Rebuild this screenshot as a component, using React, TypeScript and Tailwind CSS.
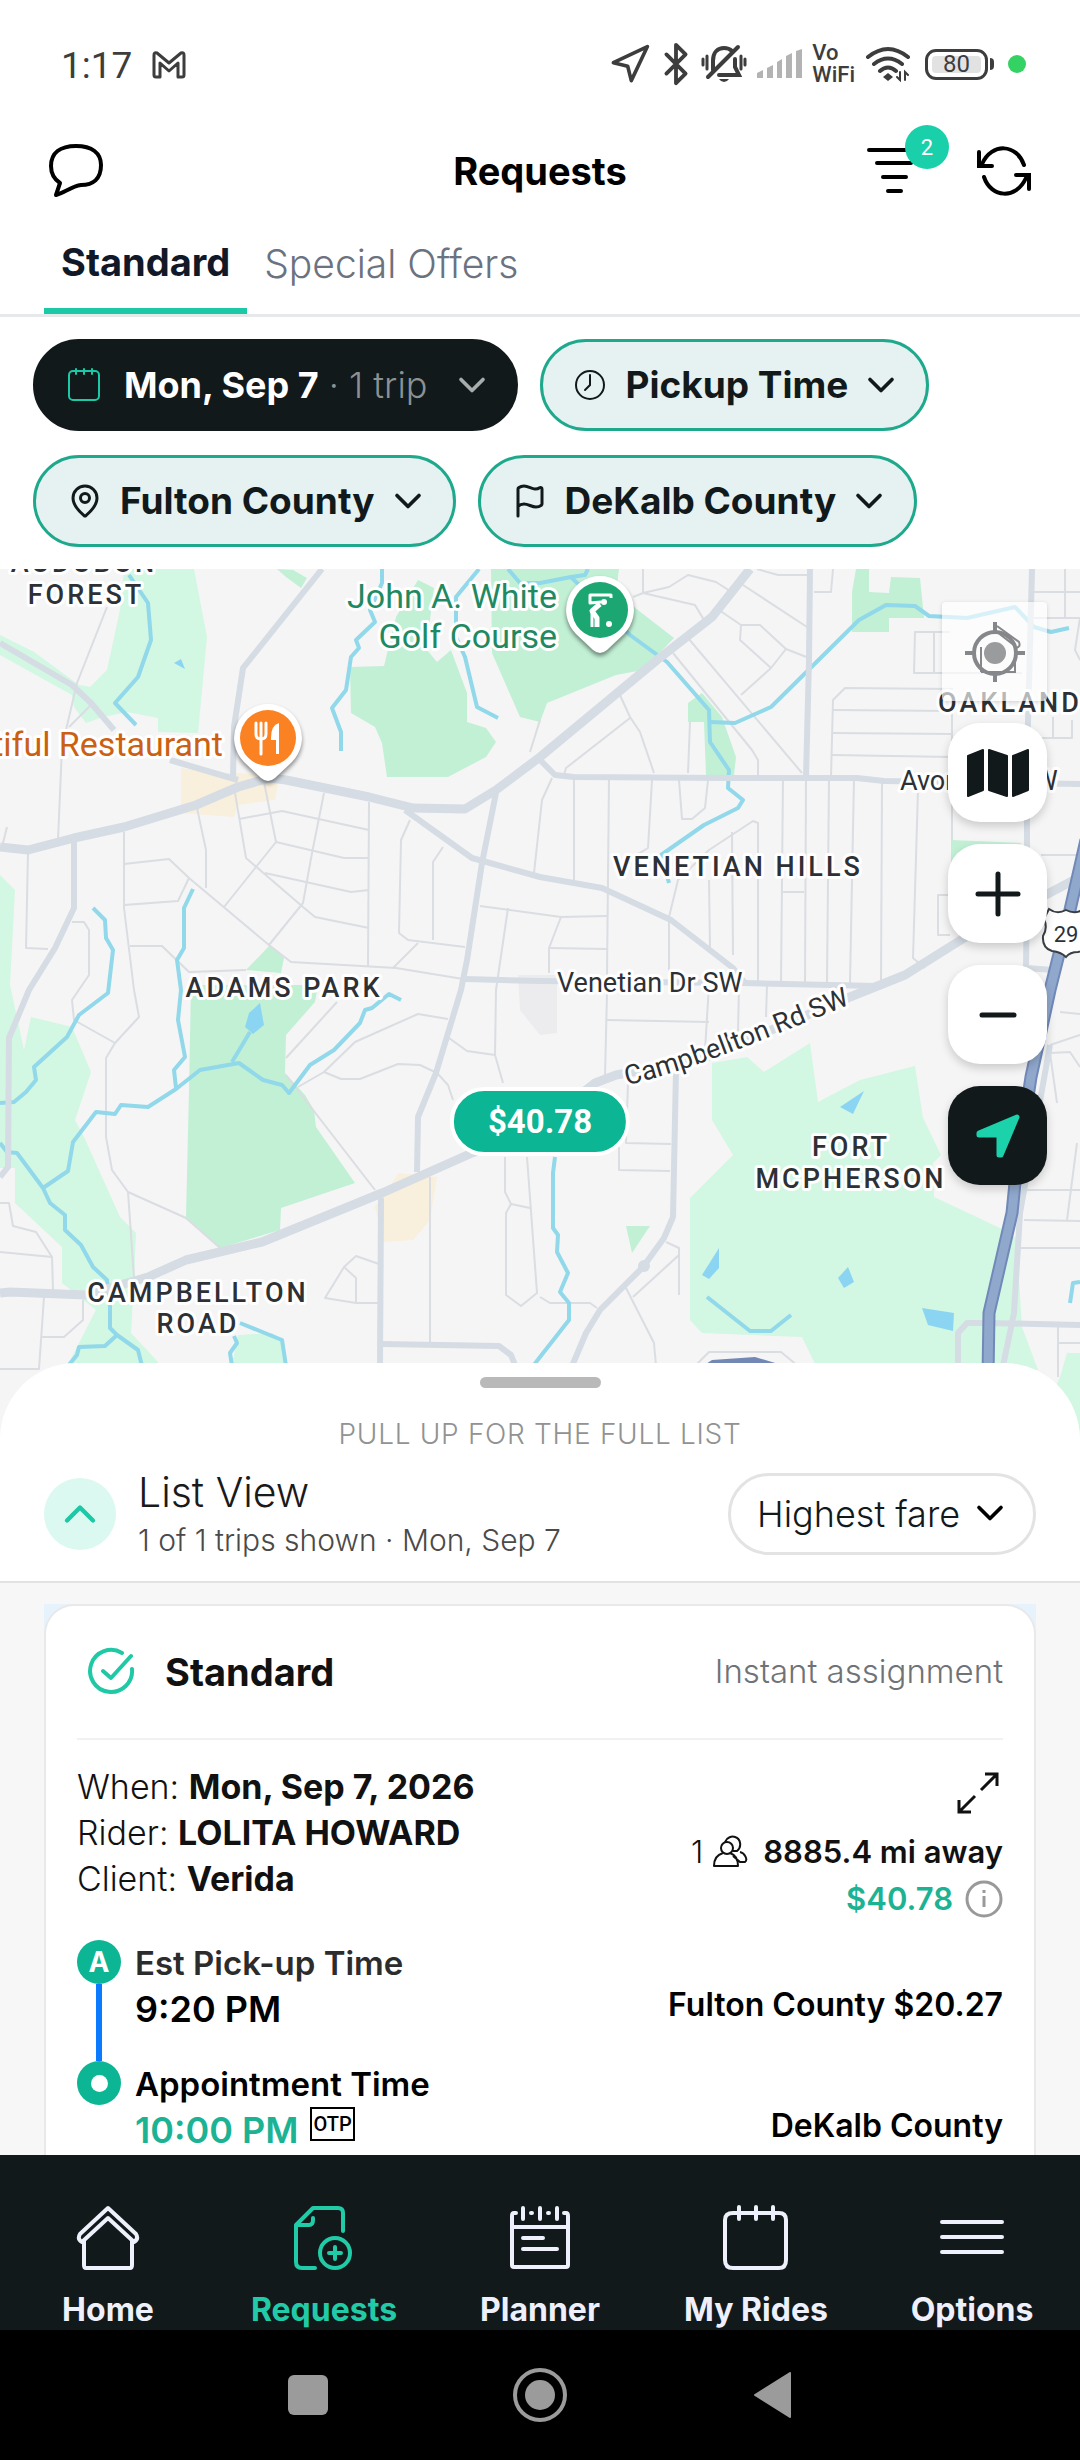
import type { ReactNode } from "react";
import { Bluetooth, ChevronDown, ChevronUp, Flag, MapPin, Navigation } from "lucide-react";

const WATER = "#90d8ea";
const MAJOR = "#d5dce4";

const lightParks = [
  "124,569 194,569 207,637 198,733 158,732 158,718 127,712 103,717 86,723 74,707 72,695 0,655 0,635 34,652 79,685 90,687 107,670 120,610",
  "0,875 15,890 10,985 24,1050 31,1017 72,1027 91,1072 75,1120 84,1137 120,1217 136,1233 134,1280 131,1333 158,1362 158,1380 60,1380 96,1310 62,1283 62,1247 15,1203 15,1168 0,1168",
  "238,1335 272,1333 282,1340 286,1370 231,1370",
  "712,1063 747,1057 764,1072 810,1043 818,1102 860,1080 915,1066 923,1118 941,1155 933,1163 934,1197 1000,1228 1019,1240 1019,1280 1022,1327 1038,1370 818,1370 802,1337 702,1333 690,1320 690,1198 733,1155 712,1120",
  "1067,1353 1080,1353 1080,1439 1050,1400 1060,1377",
];

const darkParks = [
  "277,569 293,570 307,578 301,588 286,577",
  "350,667 384,666 396,617 418,580 434,588 430,620 427,650 437,662 451,650 467,693 467,722 486,728 496,742 486,757 448,777 387,777 382,743 375,727 351,713",
  "491,569 619,569 616,593 674,638 643,670 616,675 547,703 540,722 520,717 492,653",
  "270,945 284,958 281,973 246,970",
  "191,985 318,985 315,1002 286,1035 285,1073 305,1095 314,1110 316,1127 355,1183 281,1208 280,1230 220,1248 186,1217 189,1090",
  "702,693 722,717 736,757 734,775 706,775 704,722 688,722 688,703",
  "856,569 869,569 869,592 889,593 891,577 920,578 924,618 889,618 889,632 852,632 852,592",
  "951,840 1022,843 951,880",
  "626,1226 650,1226 632,1253",
];

const blocks = [
  "181,768 181,813 234,817 238,805 275,800 279,777 238,773 212,773",
  "399,1173 437,1177 430,1220 413,1240 384,1242 375,1207",
];

const ponds = [
  "260,1003 264,1025 253,1034 245,1027 249,1013",
  "174,663 181,659 185,669",
  "702,1275 719,1248 719,1268 709,1279",
  "848,1267 854,1282 844,1288 838,1278",
  "840,1107 864,1091 853,1114",
  "922,1308 954,1313 953,1331 928,1325",
];

const streams = [
  "129,575 148,603 151,640 138,677 115,703 136,725",
  "382,569 382,583 370,610 375,622 356,640 359,648 351,657 346,690 332,708 341,732 341,751",
  "479,569 456,597 456,637 465,657 477,707 498,718",
  "508,569 520,583 540,583 571,577 585,575 588,569",
  "571,577 630,635 667,662 709,710 710,742 729,770 728,788 743,800 738,808 704,825 661,855 669,883",
  "710,722 735,723 771,707 859,620 886,605 915,606 929,616 967,618 1015,607 1034,627 1051,632 1069,628",
  "93,908 105,920 106,938 113,950 108,993 79,1015 67,1037 34,1067 36,1080 26,1092 14,1102 0,1103",
  "193,889 184,908 184,948 177,960 181,990 178,1020 185,1057 174,1070 176,1088",
  "401,1000 389,994 372,1008 365,1010 360,1023 334,1050 310,1065 289,1093 282,1085 263,1080 239,1063 200,1070 176,1089 148,1107 121,1105 115,1114 96,1112 73,1142 68,1171 43,1188",
  "232,1062 250,1032",
  "0,1143 7,1152 17,1153 43,1188 50,1203 65,1215 65,1230 81,1245 93,1267 107,1280 110,1307 110,1328 117,1335 138,1350 142,1366",
  "117,1335 105,1346 79,1347 77,1355 68,1366",
  "234,1336 237,1343 230,1353 232,1366",
  "240,1323 282,1340 286,1366",
  "555,1157 553,1173 553,1228 558,1235 557,1252 568,1273 560,1292 569,1303 569,1320 540,1357 530,1370",
  "707,1297 750,1331 771,1331 791,1315",
  "1070,1303 1073,1283 1080,1282",
];

const highRoads = [
  "0,847 28,850 74,838 124,827 196,805 238,787 269,778 286,780 369,797 413,808 465,809 496,790 540,757 657,660 712,617 750,569",
  "0,1293 10,1292 86,1295 148,1277 186,1260 262,1242 382,1193 472,1153 540,1125 595,1083 616,1075 700,1060 850,997 905,975 964,938 1074,880",
];

const midRoads = [
  "322,569 243,668 234,727 233,777",
  "170,760 238,780",
  "0,643 72,685 91,703 114,730",
  "74,840 74,908 55,948 29,990 9,1038 8,1167 0,1177",
  "405,810 472,858 540,877 602,888 671,920 733,968 745,983",
  "496,793 482,863 467,960 461,990 436,1073 418,1117 417,1172",
  "465,979 540,981 743,983 877,986 905,975",
  "381,1198 380,1366",
  "382,1344 499,1346 511,1355 517,1370",
  "676,1070 673,1217 664,1238 643,1267 600,1310 586,1333 572,1366",
  "540,760 555,775 574,777 729,778 857,778 884,781 1080,784",
  "810,569 809,660 806,777",
  "1032,569 1027,760 1027,893 1026,968 1053,970",
  "958,1366 958,1333 967,1323 988,1323 1080,1325",
  "1050,1045 1020,1213 1014,1313 1003,1366",
];

const streets = [
  "107,607 77,683 62,747 58,840",
  "69,727 91,705",
  "28,852 26,948 48,949",
  "7,827 3,843",
  "124,832 124,908 134,990 139,1017 115,1043 106,1058 106,1137 112,1170 128,1192 186,1218 220,1248",
  "128,1192 134,1277",
  "72,922 84,922 89,930 89,975 72,1000 74,1020 115,1043",
  "124,864 169,859 189,878 269,945",
  "124,905 178,901 189,878",
  "130,946 162,946 189,972 246,970",
  "197,808 206,850 206,888",
  "234,787 246,858 303,907 315,917 369,928",
  "264,782 276,842 224,907",
  "239,819 282,811 369,830",
  "276,842 344,858 369,858",
  "265,873 351,892 369,890",
  "324,793 312,853 303,903 269,945 291,962 396,968 463,979",
  "369,802 368,967",
  "410,820 401,840 399,933 408,940 465,947",
  "443,847 433,862 433,940",
  "418,943 393,968",
  "480,906 561,917 607,916",
  "508,908 496,990 495,1055 503,1083",
  "540,720 530,752",
  "534,873 542,800 552,778",
  "286,1058 337,1002",
  "286,1075 375,1190",
  "298,1087 324,1072 355,1042 418,1014 448,1019",
  "324,1072 341,1079 360,1079 398,1064 420,1065 437,1073 448,1085 453,1100",
  "449,1038 467,1051 495,1055",
  "505,1157 505,1192 511,1204 506,1213 506,1295 521,1306 537,1293 527,1157",
  "511,1204 530,1208",
  "430,1177 430,1342",
  "379,1264 356,1256 344,1267 325,1298 356,1303 379,1303",
  "344,1267 356,1278 356,1303",
  "0,1203 9,1203 13,1226 36,1232 52,1257 53,1290",
  "0,1252 52,1257",
  "44,1297 39,1369 0,1369",
  "83,1300 83,1320 64,1337 41,1337",
  "643,569 643,593 633,597",
  "643,593 669,587 688,575 716,582 733,593",
  "643,593 695,605 704,620",
  "688,638 802,773",
  "673,653 752,750 758,760 758,777",
  "743,585 807,627",
  "757,569 778,575 807,575",
  "719,610 741,625 760,625 786,649 809,658",
  "741,625 740,640 771,668 786,649",
  "771,668 741,695",
  "619,693 630,717 640,732 654,773",
  "630,718 566,768 564,775",
  "690,722 688,773",
  "814,592 831,592 833,569",
  "831,777 833,700 845,688 953,689",
  "833,710 952,711",
  "832,733 952,734",
  "832,755 952,757",
  "574,778 574,880",
  "609,778 607,975",
  "783,778 781,983",
  "806,778 805,983",
  "829,778 827,983",
  "854,778 850,983",
  "882,781 881,983",
  "918,790 913,958 925,968",
  "652,780 648,848 633,857",
  "679,780 682,819 692,819 705,808 708,780",
  "669,917 678,880 709,850 753,821 758,823 758,983",
  "709,880 710,948",
  "732,832 733,955",
  "669,918 669,973",
  "561,917 549,948 549,973",
  "549,948 607,949",
  "781,892 804,892",
  "1034,592 1080,592",
  "1065,569 1065,617",
  "1030,618 1080,618 1075,650 1080,660",
  "1022,673 914,673 915,632 950,632",
  "934,632 934,673",
  "952,707 952,840",
  "1053,717 1053,737",
  "1029,738 1072,738 1072,720",
  "950,895 938,895 938,935 950,935",
  "1041,855 1080,855",
  "607,993 605,1077",
  "607,1020 709,1022",
  "709,985 705,1050",
  "739,985 738,1033",
  "767,985 766,1017",
  "628,1083 626,1143 671,1144",
  "619,1147 619,1170 670,1171",
  "666,1242 679,1248 679,1295",
  "679,1255 633,1297",
  "626,1288 654,1343 656,1366",
  "540,1297 550,1303 590,1303 597,1308",
  "695,1366 709,1352 781,1352 798,1366",
  "1022,1190 1080,1190",
  "1024,1220 1080,1221",
  "1020,1248 1080,1248",
  "1067,1220 1077,1143",
  "1050,1045 1080,1035",
  "1057,1103 1050,1053 1070,1052 1080,1067",
  "1060,1012 1080,1014",
  "1058,1327 1058,1377",
  "1058,1343 1080,1343",
];

const areaLabels = [
  { text: "AUDUBON", x: 84, y: 572 },
  { text: "FOREST", x: 86, y: 604 },
  { text: "VENETIAN HILLS", x: 738, y: 876 },
  { text: "ADAMS PARK", x: 284, y: 997 },
  { text: "CAMPBELLTON", x: 198, y: 1302 },
  { text: "ROAD", x: 198, y: 1333 },
  { text: "FORT", x: 851, y: 1156 },
  { text: "MCPHERSON", x: 851, y: 1188 },
  { text: "OAKLAND", x: 1010, y: 712 },
];

function Lines({ items, color, width }: { items: string[]; color: string; width: number }) {
  return (
    <g fill="none" stroke={color} strokeWidth={width} strokeLinejoin="round">
      {items.map((points) => (
        <polyline key={points} points={points} />
      ))}
    </g>
  );
}

function Areas({ items, color }: { items: string[]; color: string }) {
  return (
    <g fill={color}>
      {items.map((points) => (
        <polygon key={points} points={points} />
      ))}
    </g>
  );
}

function PoiPin({ x, y, color, children }: { x: number; y: number; color: string; children: ReactNode }) {
  return (
    <g transform={`translate(${x} ${y})`}>
      <path
        className="drop-shadow-[0_3px_2px_rgba(0,0,0,0.45)]"
        fill="#fff"
        d="M0-34A34 34 0 0 1 24 24L7 40Q0 46-7 40L-24 24A34 34 0 0 1 0-34Z"
      />
      <circle r="28" fill={color} />
      {children}
    </g>
  );
}

function AreaMap() {
  return (
    <svg
      viewBox="0 569 1080 870"
      preserveAspectRatio="xMidYMin slice"
      className="block h-full w-full bg-[#f5f5f6] font-[Roboto,sans-serif]"
      role="img"
      aria-label="Map of trips near Venetian Hills"
    >
      <Areas items={lightParks} color="#d2f7e2" />
      <Areas items={darkParks} color="#c1f0d5" />
      <Areas items={blocks} color="#f8efdd" />
      <Areas items={["518,975 557,975 557,1033 540,1035 520,1010"]} color="#ececee" />
      <Areas items={ponds} color="#8cd5f2" />
      <Lines items={streets} color="#dadde1" width={2} />
      <Lines items={streams} color={WATER} width={4} />
      <Lines items={midRoads} color={MAJOR} width={6} />
      <Lines items={highRoads} color={MAJOR} width={9} />
      <circle cx="644" cy="1266" r="6" fill={MAJOR} />
      <Areas items={["703,1366 712,1360 755,1357 785,1366"]} color="#7288b4" />
      <Lines
        items={["1086,840 1070,910 1050,990 1031,1077 1015,1183 1012,1213 989,1313 987,1439"]}
        color="#7189b8"
        width={13}
      />
      <Lines
        items={["1086,840 1070,910 1050,990 1031,1077 1015,1183 1012,1213 989,1313 987,1439"]}
        color="#90a8cc"
        width={9}
      />

      <g stroke="#fff" strokeWidth="6" strokeLinejoin="round" className="[paint-order:stroke]">
        <g fill="#2d3135" fontSize="27" fontWeight="500" letterSpacing="3" textAnchor="middle">
          {areaLabels.map((label) => (
            <text key={label.text} x={label.x} y={label.y}>
              {label.text}
            </text>
          ))}
        </g>
        <g fill="#2d3135" fontSize="27">
          <text x="557" y="992">Venetian Dr SW</text>
          <text x="900" y="790">Avon Ave SW</text>
          <path id="campbellton" d="M627 1085C690 1071 770 1037 870 996" fill="none" stroke="none" />
          <text>
            <textPath href="#campbellton">Campbellton Rd SW</textPath>
          </text>
        </g>
        <g fontSize="34" textAnchor="end">
          <g fill="#1f8a62">
            <text x="557" y="608">John A. White</text>
            <text x="557" y="648">Golf Course</text>
          </g>
          <text x="223" y="756" fill="#cb6012">Beautiful Restaurant</text>
        </g>
      </g>

      <PoiPin x={268} y={738} color="#fb8222">
        <g fill="none" stroke="#fff" strokeWidth="3" strokeLinecap="round">
          <path d="M-12-15V-4Q-12 1-7 1Q-2 1-2-4V-15M-7-15V16" />
        </g>
        <path fill="#fff" d="M3 0Q3-13 11-15V16H8V2H3Z" />
      </PoiPin>
      <PoiPin x={600} y={610} color="#1ba672">
        <g fill="none" stroke="#fff" strokeWidth="3" strokeLinejoin="round">
          <path d="M11-12V-15H-10V-7L1-8" />
          <path d="M0-6L-8 1L-3 8V17" strokeWidth="5" />
          <path d="M-8 1V17" />
        </g>
        <circle cx="4" cy="-8" r="3" fill="#fff" />
        <circle cx="9" cy="14" r="3" fill="#fff" />
      </PoiPin>

      <path
        fill="#fff"
        stroke="#3a3f44"
        strokeWidth="2"
        d="M1049 909Q1057 915 1066 910Q1075 915 1084 909L1090 918Q1082 930 1088 940Q1088 950 1078 952Q1070 952 1066 957Q1061 952 1052 951Q1042 948 1043 936Q1048 928 1044 919Z"
      />
      <text x="1066" y="942" fontSize="22" textAnchor="middle" fill="#2d3135">
        29
      </text>
    </svg>
  );
}

function MapButton({ label, children, dark }: { label: string; children: ReactNode; dark?: boolean }) {
  return (
    <button
      type="button"
      aria-label={label}
      className={
        dark
          ? "flex size-[99px] items-center justify-center rounded-[32px] bg-[#12191b] shadow-[0_4px_10px_rgba(0,0,0,0.18)]"
          : "flex size-[99px] items-center justify-center rounded-[32px] bg-white shadow-[0_4px_10px_rgba(0,0,0,0.18)]"
      }
    >
      {children}
    </button>
  );
}

function MapControls() {
  return (
    <div className="absolute top-[33px] right-[33px] flex flex-col items-end gap-[22px]">
      <button
        type="button"
        aria-label="My location"
        className="flex h-[99px] w-[105px] items-center justify-center rounded-sm bg-white/65 shadow-[0_1px_4px_rgba(0,0,0,0.15)]"
      >
        <svg viewBox="0 0 60 60" className="size-[60px]" fill="none" stroke="#85878a" strokeWidth="4">
          <circle cx="30" cy="31" r="21" />
          <circle cx="30" cy="31" r="11" fill="#999b9d" stroke="none" />
          <path d="M30 0V12M30 50V60M0 31H10M50 31H60" />
          <path d="M16 50V25M32 4L54 20Q56 25 51 26M32 10L50 24M50 34V50H16" strokeWidth="2" />
        </svg>
      </button>
      <MapButton label="Map type">
        <svg viewBox="0 0 62 48" className="h-[48px] w-[62px]" fill="#12191b" stroke="#12191b" strokeWidth="2" strokeLinejoin="round">
          <path d="M1 7L16 1V41L1 47ZM22 1L40 7V47L22 41ZM46 7L61 1V41L46 47Z" />
        </svg>
      </MapButton>
      <MapButton label="Zoom in">
        <svg viewBox="0 0 46 46" className="size-[46px]" stroke="#12191b" strokeWidth="5" strokeLinecap="round">
          <path d="M23 3V43M3 23H43" />
        </svg>
      </MapButton>
      <MapButton label="Zoom out">
        <svg viewBox="0 0 46 46" className="size-[46px]" stroke="#12191b" strokeWidth="5" strokeLinecap="round">
          <path d="M7 23H39" />
        </svg>
      </MapButton>
      <MapButton label="Recenter" dark>
        <svg viewBox="0 0 46 46" className="size-[46px]" fill="#1bd2ab" stroke="#1bd2ab" strokeWidth="5" strokeLinejoin="round">
          <path d="M42 4L26 42H24V22H4V20Z" />
        </svg>
      </MapButton>
    </div>
  );
}

function StatusBar() {
  return (
    <div className="flex h-32 items-center justify-between pr-[54px] pl-[61px] font-[Roboto,sans-serif] text-[#3d3d3d]">
      <div className="flex items-center gap-5 pt-[2px]">
        <span className="text-[37px] leading-none">1:17</span>
        <svg viewBox="0 0 34 28" className="h-7 w-[34px]" fill="none" stroke="currentColor" strokeWidth="3" strokeLinejoin="round">
          <path d="M2 4Q2 1 5 2L17 12L29 2Q32 1 32 4V24Q32 26 30 26H26V12L17 20L8 12V26H4Q2 26 2 24Z" />
        </svg>
      </div>
      <div className="flex items-center gap-[10px]">
        <Navigation className="size-[43px]" strokeWidth={2} />
        <Bluetooth className="size-[46px] -mx-2" strokeWidth={2} />
        <svg viewBox="0 0 46 40" className="h-10 w-[46px]" fill="none" stroke="currentColor" strokeWidth="3" strokeLinecap="round">
          <path d="M2 15V21M6 12V25M40 12V25M44 15V21" />
          <path d="M12 26V17C12 8 17 4 23 4Q28 4 31 7M34 15V23L38 31H18" strokeWidth="4" />
          <path d="M37 3L7 33" strokeWidth="4" />
          <path d="M18 35H28Q26 38 23 38Q20 38 18 35Z" fill="currentColor" stroke="none" />
        </svg>
        <svg viewBox="0 0 45 30" className="h-[30px] w-[45px]" fill="#b3b3b3">
          <path d="M0 24L6 21V29H0ZM10 19L16 16V29H10ZM20 13L25 10V29H20ZM29 7L35 4V29H29ZM39 2L45 0V29H39Z" />
        </svg>
        <span className="text-[22px] leading-[22px] font-medium">
          Vo
          <br />
          WiFi
        </span>
        <svg viewBox="0 0 46 36" className="h-9 w-[46px]" fill="none" stroke="currentColor" strokeWidth="4" strokeLinecap="round">
          <path d="M3 11Q23-5 43 11M9 18Q23 7 37 18M15 25Q23 18 31 25" />
          <path d="M23 27L28 31L23 35L18 31Z" fill="currentColor" stroke="none" />
          <path d="M35 26V34L32 31M40 34V26L43 29" strokeWidth="2" />
        </svg>
        <div className="ml-1 flex items-center gap-[2px]">
          <div className="flex h-[31px] w-[63px] items-center justify-center rounded-[11px] border-[3px] border-current bg-[#e2e2e2] text-2xl leading-none shadow-[inset_0_0_0_4px_white]">
            80
          </div>
          <div className="h-3 w-1 rounded-r bg-current" />
        </div>
        <div className="ml-1 size-[18px] rounded-full bg-[#34d163]" />
      </div>
    </div>
  );
}

function Header() {
  return (
    <header className="grid h-[86px] grid-cols-3 items-center px-12 text-black">
      <button type="button" aria-label="Messages" className="justify-self-start">
        <svg viewBox="0 0 56 54" className="h-[54px] w-14" fill="none" stroke="currentColor" strokeWidth="4" strokeLinejoin="round">
          <path d="M28 2C44 2 53 9 53 21C53 35 45 41 33 41C24 42 16 49 8 51L12 39C6 35 3 30 3 22C3 9 12 2 28 2Z" />
        </svg>
      </button>
      <h1 className="justify-self-center text-[38px] leading-[46px] font-bold">Requests</h1>
      <div className="flex items-center gap-[55px] justify-self-end">
        <button type="button" aria-label="Filters, 2 active" className="relative">
          <svg viewBox="0 0 54 46" className="h-[46px] w-[54px]" stroke="currentColor" strokeWidth="4" strokeLinecap="round">
            <path d="M2 2H52M10 15H44M16 29H39M21 43H34" />
          </svg>
          <span className="absolute -top-[23px] -right-[28px] flex size-11 items-center justify-center rounded-full bg-[#1ad0aa] font-[Roboto,sans-serif] text-[22px] text-white">
            2
          </span>
        </button>
        <button type="button" aria-label="Refresh">
          <svg viewBox="0 0 56 50" className="h-[50px] w-14" fill="none" stroke="currentColor" strokeWidth="4" strokeLinecap="round">
            <path d="M48 19C41-2 16-4 6 18M3 6V20H16M8 31C15 52 40 54 50 32M53 43V29H40" />
          </svg>
        </button>
      </div>
    </header>
  );
}

function Tabs() {
  return (
    <div role="tablist" className="flex border-b-[3px] border-[#e7e8e9] px-11">
      <button type="button" role="tab" aria-selected className="border-b-[6px] border-[#1cc9a6] px-[17px] pt-[25px] pb-[23px] text-[38px] leading-[46px] font-bold text-[#111827]">
        Standard
      </button>
      <button type="button" role="tab" aria-selected={false} className="border-b-[6px] border-transparent px-[17px] pt-[27px] pb-[21px] text-[39px] leading-[46px] font-light text-[#6b7280]">
        Special Offers
      </button>
    </div>
  );
}

function CalendarIcon({ className }: { className: string }) {
  return (
    <svg viewBox="0 0 34 34" className={className} fill="none" stroke="currentColor" strokeWidth="2" strokeLinecap="round">
      <rect x="2" y="3" width="30" height="29" rx="4" />
      <path d="M9 1V6M17 1V6M25 1V6" />
    </svg>
  );
}

function FilterPill({ icon, children }: { icon: ReactNode; children: ReactNode }) {
  return (
    <button
      type="button"
      aria-haspopup="dialog"
      className="flex items-center gap-[19px] rounded-full border-[3px] border-[#1fa98c] bg-[#e6f2f1] px-[31px] py-5 text-[37px] leading-[46px] font-bold whitespace-nowrap text-[#12191b]"
    >
      {icon}
      <span>{children}</span>
      <ChevronDown className="-mx-2 size-11" strokeWidth={2} />
    </button>
  );
}

function Filters() {
  return (
    <div className="flex flex-wrap gap-x-[22px] gap-y-6 px-[33px] pt-[22px] pb-[22px]">
      <button
        type="button"
        aria-haspopup="dialog"
        className="flex items-center gap-[23px] rounded-full border-[3px] border-[#12191b] bg-[#12191b] px-[31px] py-5 text-[36px] leading-[46px] whitespace-nowrap"
      >
        <CalendarIcon className="size-[34px] text-[#1cc9a6]" />
        <span className="font-light text-[#8c9193]">
          <span className="font-bold text-white">Mon, Sep 7</span> · 1 trip
        </span>
        <ChevronDown className="-mr-[10px] size-11 text-[#a7acad]" strokeWidth={2} />
      </button>
      <FilterPill
        icon={
          <svg viewBox="0 0 32 32" className="size-8" fill="none" stroke="currentColor" strokeWidth="2" strokeLinecap="round">
            <circle cx="16" cy="16" r="14" />
            <path d="M16 6V16L11 21" />
          </svg>
        }
      >
        Pickup Time
      </FilterPill>
      <FilterPill icon={<MapPin className="-mr-[2px] size-9" strokeWidth={2} />}>Fulton County</FilterPill>
      <FilterPill icon={<Flag className="-mr-[2px] size-9" strokeWidth={2} />}>DeKalb County</FilterPill>
    </div>
  );
}

function SheetHeader() {
  return (
    <div className="relative -mt-[76px] rounded-t-[76px] border-b-2 border-[#e2e2e2] bg-white px-11 pt-[14px] pb-[19px]">
      <div className="mx-auto h-[11px] w-[121px] rounded-full bg-[#b9b9b9]" />
      <p className="mt-[26px] text-center text-[28px] leading-10 font-light tracking-wide text-[#929292]">
        PULL UP FOR THE FULL LIST
      </p>
      <div className="mt-3 flex items-center">
        <button type="button" aria-label="Expand list" className="flex size-[72px] items-center justify-center rounded-full bg-[#dbf8f1] text-[#1cc9a6]">
          <ChevronUp className="size-[52px]" strokeWidth={2} />
        </button>
        <div className="ml-[22px] flex-1">
          <h2 className="text-[41px] leading-[52px] font-light text-[#1a1a1a]">List View</h2>
          <p className="text-[30px] leading-[44px] font-light text-[#4a4a4a]">1 of 1 trips shown · Mon, Sep 7</p>
        </div>
        <div className="relative">
          <select
            aria-label="Sort trips"
            className="appearance-none rounded-full border-[3px] border-[#e3e3e3] bg-white py-4 pr-[72px] pl-[26px] text-[36px] leading-[44px] font-light text-[#12191b]"
          >
            <option>Highest fare</option>
            <option>Lowest fare</option>
          </select>
          <ChevronDown className="pointer-events-none absolute top-[18px] right-6 size-11" strokeWidth={2} />
        </div>
      </div>
    </div>
  );
}

function TripCard() {
  return (
    <article className="flex-1 rounded-t-[30px] border-x-2 border-t-2 border-[#e9e9e9] bg-white px-[31px]">
      <div className="flex h-[134px] items-center border-b-2 border-[#f1f1f1] pl-[9px]">
        <svg viewBox="0 0 50 50" className="size-[50px]" fill="none" stroke="#20c9a5" strokeWidth="4" strokeLinecap="round" strokeLinejoin="round">
          <path d="M36 6A21 21 0 1 0 46 22M17 24L25 31L45 9" />
        </svg>
        <h3 className="ml-[29px] flex-1 text-[38px] font-bold text-[#111]">Standard</h3>
        <span className="text-[33px] font-light text-[#6f7377]">Instant assignment</span>
      </div>
      <div className="flex justify-between pt-6 text-[34px] leading-[46px] text-[#111]">
        <div className="font-light">
          <p>When: <b className="font-bold">Mon, Sep 7, 2026</b></p>
          <p>Rider: <b className="font-bold">LOLITA HOWARD</b></p>
          <p>Client: <b className="font-bold">Verida</b></p>
        </div>
        <div className="flex flex-col items-end">
          <button type="button" aria-label="Expand trip" className="mt-2 mr-1">
            <svg viewBox="0 0 42 42" className="size-[42px]" fill="none" stroke="#111" strokeWidth="3">
              <path d="M24 18L40 2M28 2H40V14M18 24L2 40M2 28V40H14" />
            </svg>
          </button>
          <p className="mt-[15px] flex items-center text-[31px] leading-[46px] font-light">
            1
            <svg viewBox="0 0 36 34" className="mr-[15px] ml-[9px] h-[34px] w-9" fill="none" stroke="#111" strokeWidth="2" strokeLinejoin="round">
              <circle cx="15" cy="13" r="6" />
              <path d="M13 7C15 2 20 1 23 2C29 4 30 12 25 16L21 16M11 18C4 20 2 25 2 31H26C26 25 24 20 18 18M21 21L28 27H33C36 25 33 18 28 17" />
            </svg>
            <b className="font-semibold">8885.4 mi away</b>
          </p>
          <p className="flex items-center gap-3 text-[31px] leading-[48px] font-semibold text-[#1bb394]">
            $40.78
            <button type="button" aria-label="Fare details">
              <svg viewBox="0 0 38 38" className="size-[38px]" fill="none" stroke="#999" strokeWidth="3">
                <circle cx="19" cy="19" r="17" />
                <path d="M19 16V27M19 10V13" />
              </svg>
            </button>
          </p>
        </div>
      </div>
      <ol className="mt-[17px] leading-[46px] font-semibold text-black">
        <li className="flex">
          <div className="flex flex-col items-center">
            <span className="flex size-11 items-center justify-center rounded-full bg-[#0cb594] text-[28px] font-bold text-white">A</span>
            <span className="w-[6px] flex-1 bg-[#0a7aff]" />
          </div>
          <div className="ml-[14px] pb-[29px]">
            <p className="text-[33px] text-[#2c2c2c]">Est Pick-up Time</p>
            <p className="text-[36px]">9:20 PM</p>
          </div>
          <p className="ml-auto pt-[42px] text-[32px] leading-[46px]">Fulton County $20.27</p>
        </li>
        <li className="flex">
          <span className="flex size-11 items-center justify-center rounded-full bg-[#0cb594]">
            <span className="size-[17px] rounded-full bg-white" />
          </span>
          <div className="ml-[14px]">
            <p className="text-[33px]">Appointment Time</p>
            <p className="flex items-start gap-3 text-[36px] text-[#1bb394]">
              10:00 PM
              <span className="border-2 border-black px-px font-[Roboto,sans-serif] text-[20px] leading-[30px] font-medium text-black">OTP</span>
            </p>
          </div>
          <p className="ml-auto pt-[42px] text-[32px] leading-[46px]">DeKalb County</p>
        </li>
      </ol>
    </article>
  );
}

const navItems = [
  {
    label: "Home",
    icon: <path d="M5 29L33 3L61 29Q64 34 59 37L33 13L7 37Q2 34 5 29ZM9 36V60Q9 63 11 63H55Q57 63 57 60V36" />,
  },
  {
    label: "Requests",
    active: true,
    icon: (
      <>
        <path d="M52 26V8Q52 3 47 3H22L5 20V57Q5 63 11 63H24M5 20H18Q22 20 22 15V13" />
        <circle cx="44" cy="48" r="15" />
        <path d="M44 42V54M38 48H50" />
      </>
    ),
  },
  {
    label: "Planner",
    icon: (
      <path d="M9 8H7Q5 8 5 11V60Q5 62 7 62H59Q61 62 61 60V11Q61 8 59 8H57M5 22H61M16 33H36M16 44H50M16 3V14M33 3V14M50 3V14M24 8H25M41 8H42" />
    ),
  },
  {
    label: "My Rides",
    icon: <path d="M10 8H56Q63 8 63 15V55Q63 63 56 63H10Q2 63 2 55V15Q2 8 10 8ZM16 2V14M33 2V14M50 2V14" />,
  },
  { label: "Options", icon: <path d="M3 17H63M3 32H63M3 47H63" /> },
];

function BottomNav() {
  return (
    <nav className="grid grid-cols-5 bg-[#12191b] pt-[50px]">
      {navItems.map((item) => (
        <a
          key={item.label}
          href="#"
          aria-current={item.active ? "page" : undefined}
          className={item.active ? "flex flex-col items-center text-[#22cba7]" : "flex flex-col items-center text-[#eef0fb]"}
        >
          <svg viewBox="0 0 66 66" className="size-[66px]" fill="none" stroke="currentColor" strokeWidth="4" strokeLinecap="round" strokeLinejoin="round">
            {item.icon}
          </svg>
          <span className="mt-[19px] text-[32px] leading-10 font-bold">{item.label}</span>
        </a>
      ))}
    </nav>
  );
}

function SystemBar() {
  return (
    <div className="flex h-[130px] items-center justify-center gap-[175px] bg-black">
      <button type="button" aria-label="Recent apps" className="flex w-[60px] justify-center">
        <span className="size-10 rounded-md bg-[#9b9b9b]" />
      </button>
      <button type="button" aria-label="Home screen">
        <svg viewBox="0 0 54 54" className="size-[54px]" fill="#9b9b9b">
          <circle cx="27" cy="27" r="25" fill="none" stroke="#9b9b9b" strokeWidth="4" />
          <circle cx="27" cy="27" r="15" />
        </svg>
      </button>
      <button type="button" aria-label="Back" className="flex w-[60px] justify-center">
        <svg viewBox="0 0 38 46" className="h-[46px] w-[38px]" fill="#9b9b9b" stroke="#9b9b9b" strokeWidth="2" strokeLinejoin="round">
          <path d="M37 1V45L2 23Z" />
        </svg>
      </button>
    </div>
  );
}

export default function App() {
  return (
    <div className="flex min-h-screen flex-col bg-white font-[Inter,sans-serif]">
      <StatusBar />
      <Header />
      <Tabs />
      <Filters />
      <main className="flex flex-1 flex-col">
        <section className="relative h-[870px] overflow-hidden">
          <AreaMap />
          <button
            type="button"
            className="absolute top-[518px] left-1/2 -translate-x-1/2 rounded-full border-4 border-white bg-[#0cb594] px-[34px] py-2 font-[Roboto,sans-serif] text-[33px] leading-[45px] font-bold text-white"
          >
            $40.78
          </button>
          <MapControls />
        </section>
        <SheetHeader />
        <section className="flex flex-1 flex-col bg-[#f7f7f7] px-11 pt-[21px]">
          <div className="flex flex-1 flex-col bg-[linear-gradient(#e6f3fd,#e6f3fd)] bg-[length:100%_40px] bg-no-repeat">
            <TripCard />
          </div>
        </section>
      </main>
      <BottomNav />
      <SystemBar />
    </div>
  );
}
